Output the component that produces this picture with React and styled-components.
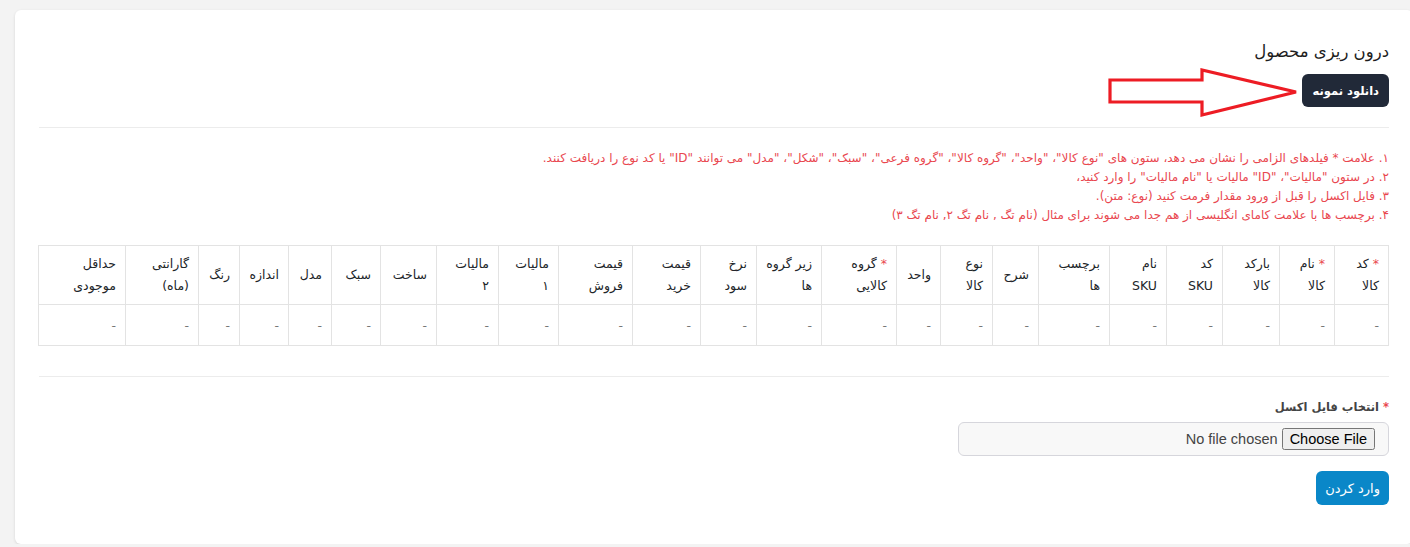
import React from 'react'
import styled, { createGlobalStyle } from 'styled-components'

const GlobalStyle = createGlobalStyle`
  html, body {
    margin: 0;
    padding: 0;
    background: #f3f3f3;
    overflow: hidden;
  }
  body {
    font-family: 'DejaVu Sans', sans-serif;
    color: #212529;
  }
`

const columns = [
  { lines: ['کد', 'کالا'], required: true, width: 54 },
  { lines: ['نام', 'کالا'], required: true, width: 55 },
  { lines: ['بارکد', 'کالا'], width: 57 },
  { lines: ['کد', 'SKU'], width: 56 },
  { lines: ['نام', 'SKU'], width: 57 },
  { lines: ['برچسب', 'ها'], width: 71 },
  { lines: ['شرح'], width: 46 },
  { lines: ['نوع', 'کالا'], width: 52 },
  { lines: ['واحد'], width: 44 },
  { lines: ['گروه', 'کالایی'], required: true, width: 75 },
  { lines: ['زیر گروه', 'ها'], width: 65 },
  { lines: ['نرخ', 'سود'], width: 56 },
  { lines: ['قیمت', 'خرید'], width: 68 },
  { lines: ['قیمت', 'فروش'], width: 74 },
  { lines: ['مالیات', '۱'], width: 60 },
  { lines: ['مالیات', '۲'], width: 62 },
  { lines: ['ساخت'], width: 56 },
  { lines: ['سبک'], width: 49 },
  { lines: ['مدل'], width: 43 },
  { lines: ['اندازه'], width: 49 },
  { lines: ['رنگ'], width: 41 },
  { lines: ['گارانتی', '(ماه)'], width: 73 },
  { lines: ['حداقل', 'موجودی'], width: 87 },
]

const notes = [
  '۱. علامت * فیلدهای الزامی را نشان می دهد، ستون های "نوع کالا"، "واحد"، "گروه کالا"، "گروه فرعی"، "سبک"، "شکل"، "مدل" می توانند "ID" یا کد نوع را دریافت کنند.',
  '۲. در ستون "مالیات"، "ID" مالیات یا "نام مالیات" را وارد کنید،',
  '۳. فایل اکسل را قبل از ورود مقدار فرمت کنید (نوع: متن).',
  '۴. برچسب ها با علامت کامای انگلیسی از هم جدا می شوند برای مثال (نام تگ , نام تگ ۲, نام تگ ۳)',
]

const ArrowMark = () => (
  <Arrow width="192" height="50" viewBox="0 0 192 50">
    <polygon
      points="2,12 94,12 94,2 188,24 94,47 94,34 2,34"
      fill="none"
      stroke="#ed1c24"
      strokeWidth="3.2"
      strokeLinejoin="miter"
    />
  </Arrow>
)

const App = () => (
  <>
    <GlobalStyle />
    <Page dir="rtl">
      <Card>
        <Title>درون ریزی محصول</Title>
        <ButtonRow>
          <DarkButton type="button">دانلود نمونه</DarkButton>
          <ArrowMark />
        </ButtonRow>

        <Divider />

        <Notes>
          {notes.map(note => (
            <li key={note}>{note}</li>
          ))}
        </Notes>

        <Table>
          <colgroup>
            {columns.map(col => (
              <col key={col.lines.join()} style={{ width: col.width }} />
            ))}
          </colgroup>
          <thead>
            <tr>
              {columns.map(col => (
                <Th key={col.lines.join()}>
                  {col.lines.map((line, i) => (
                    <div key={line}>
                      {i === 0 && col.required && <Star>* </Star>}
                      {line}
                    </div>
                  ))}
                </Th>
              ))}
            </tr>
          </thead>
          <tbody>
            <tr>
              {columns.map(col => (
                <Td key={col.lines.join()}>-</Td>
              ))}
            </tr>
          </tbody>
        </Table>

        <Divider $space={30} />

        <Label>
          <Star>* </Star>
          انتخاب فایل اکسل
        </Label>
        <FileInput type="file" />
        <PrimaryButton type="button">وارد کردن</PrimaryButton>
      </Card>
    </Page>
  </>
)

const Page = styled.div`
  padding: 10px 0 0 15px;
  width: 1398px;
`

const Card = styled.div`
  width: 1350px;
  padding: 28px 24px 39px;
  background: #fff;
  border-radius: 6px;
  box-shadow: 0 1px 3px rgba(0, 0, 0, 0.12);
  display: flex;
  flex-direction: column;
  align-items: flex-start;
`

const Title = styled.h1`
  margin: 0;
  font-size: 16.5px;
  line-height: 28px;
  font-weight: 400;
  color: #1d1d1d;
`

const ButtonRow = styled.div`
  position: relative;
  margin-top: 8px;
  align-self: stretch;
  display: flex;
`

const Arrow = styled.svg`
  position: absolute;
  top: -6px;
  right: 89px;
`

const DarkButton = styled.button`
  height: 33px;
  padding: 0 10px;
  border: none;
  border-radius: 6px;
  background: #212938;
  color: #fff;
  font-family: inherit;
  font-size: 11.5px;
  font-weight: 700;
`

const Divider = styled.hr`
  align-self: stretch;
  margin: ${props => props.$space || 20}px 0 0;
  border: none;
  border-top: 1px solid #ececec;
`

const Notes = styled.ol`
  list-style: none;
  margin: 21px 0 0;
  padding: 0;
  font-size: 12px;
  line-height: 19px;
  color: #e9474f;
`

const Table = styled.table`
  margin-top: 20px;
  width: 1350px;
  table-layout: fixed;
  border-collapse: collapse;
  font-size: 12.5px;
`

const Th = styled.th`
  height: 58px;
  padding: 0 9px;
  border: 1px solid #e3e3e3;
  text-align: right;
  vertical-align: middle;
  font-weight: 400;
  line-height: 22px;
  color: #212529;
  white-space: nowrap;
`

const Td = styled.td`
  height: 40px;
  padding: 0 9px;
  border: 1px solid #e3e3e3;
  text-align: right;
  color: #777;
`

const Star = styled.span`
  color: #e9474f;
`

const Label = styled.label`
  margin-top: 20px;
  font-size: 11.5px;
  line-height: 20px;
  font-weight: 700;
  color: #444;
`

const FileInput = styled.input`
  box-sizing: border-box;
  margin-top: 5px;
  width: 431px;
  height: 34px;
  padding: 5px 13px;
  border: 1px solid #d6d6dc;
  border-radius: 6px;
  background: #f8f8f8;
  font-family: 'Liberation Sans', Arial, sans-serif;
  font-size: 14.5px;
  color: #444;
`

const PrimaryButton = styled.button`
  margin-top: 15px;
  height: 34px;
  padding: 0 9px;
  border: none;
  border-radius: 6px;
  background: #0a87c8;
  color: #fff;
  font-family: inherit;
  font-size: 13px;
`

export default App
